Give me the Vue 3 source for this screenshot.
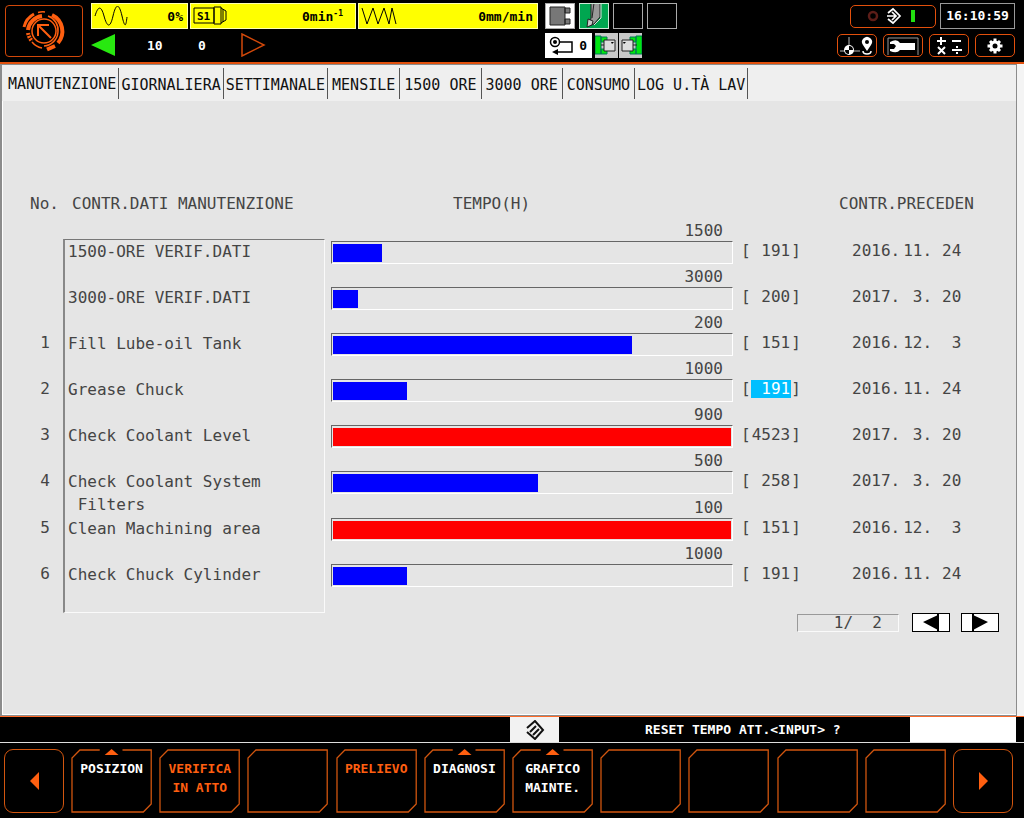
<script setup>
import { ref } from 'vue'

const tabs = [
  { label: 'MANUTENZIONE', tight: true },
  { label: 'GIORNALIERA', tight: true },
  { label: 'SETTIMANALE', tight: true },
  { label: 'MENSILE' },
  { label: '1500 ORE' },
  { label: '3000 ORE' },
  { label: 'CONSUMO' },
  { label: 'LOG U.TÀ LAV', tight: true }
]
const activeTab = ref('MANUTENZIONE')
const pageText = '1/  2'

const rows = [
  { no: '', name: '1500-ORE VERIF.DATI', limit: '1500', fill: 12.2, value: ' 191', date: ['2016.', '11.', '24'] },
  { no: '', name: '3000-ORE VERIF.DATI', limit: '3000', fill: 6.2, value: ' 200', date: ['2017.', ' 3.', '20'] },
  { no: '1', name: 'Fill Lube-oil Tank', limit: '200', fill: 75, value: ' 151', date: ['2016.', '12.', ' 3'] },
  { no: '2', name: 'Grease Chuck', limit: '1000', fill: 18.6, value: ' 191', date: ['2016.', '11.', '24'], selected: true },
  { no: '3', name: 'Check Coolant Level', limit: '900', fill: 100, value: '4523', date: ['2017.', ' 3.', '20'], over: true },
  { no: '4', name: 'Check Coolant System\n Filters', limit: '500', fill: 51.5, value: ' 258', date: ['2017.', ' 3.', '20'] },
  { no: '5', name: 'Clean Machining area', limit: '100', fill: 100, value: ' 151', date: ['2016.', '12.', ' 3'], over: true },
  { no: '6', name: 'Check Chuck Cylinder', limit: '1000', fill: 18.6, value: ' 191', date: ['2016.', '11.', '24'] }
]

const keys = [
  { text: 'POSIZION', menu: true },
  { text: 'VERIFICA\nIN ATTO', active: true },
  { text: '' },
  { text: 'PRELIEVO', active: true },
  { text: 'DIAGNOSI', menu: true },
  { text: 'GRAFICO\nMAINTE.', menu: true, left: true },
  { text: '' },
  { text: '' },
  { text: '' },
  { text: '' }
]
</script>

<template>
  <div class="screen">
    <header class="top">
      <button class="mode" aria-label="Mode">
        <svg width="48" height="48" viewBox="0 0 48 48" fill="none" stroke="#ff5f10">
          <circle cx="24" cy="24" r="12" stroke-width="1.5" />
          <path d="M8 23A16 16 0 0 1 22 9" stroke-width="4" />
          <path d="M4 20A20 20 0 0 1 14 7" stroke-width="3" />
          <path d="M18 5.500A19 19 0 0 1 25 5M28 9A15 15 0 0 1 38 25A15 15 0 0 1 24 39" stroke-width="1.5" />
          <path d="M32 8A18 18 0 0 1 38 36" stroke-width="4" />
          <path d="M27 42.500L35 39" stroke-width="4" />
          <path d="M8 26A16 16 0 0 0 12 34" stroke-width="4" stroke-dasharray="2 1" />
          <path d="M12 35A17 17 0 0 0 22 41" stroke-width="1.5" />
          <path d="M31 31L18 18M18 29V18H29" stroke-width="2" />
        </svg>
      </button>

      <div class="readouts">
        <div class="meters">
          <div class="meter">
            <svg width="34" height="20" viewBox="0 0 34 20" fill="none" stroke="#000">
              <path d="M1 10C4 0 7-1 10 10S16 23 19 10S25-3 28 10S32 20 33 11" />
            </svg>
            <span>0%</span>
          </div>
          <div class="meter speed">
            <svg width="36" height="20" viewBox="0 0 36 20" fill="none" stroke="#000">
              <path d="M1 2H21V17H1ZM21 1H28V18H21ZM28 2L33 5V14L28 17M30 3V16" />
              <text x="4" y="14" font-size="11" font-weight="bold" font-family="DejaVu Sans Mono, monospace" fill="#000" stroke="none">S1</text>
            </svg>
            <span>0min<sup>-1</sup></span>
          </div>
          <div class="meter">
            <svg width="36" height="20" viewBox="0 0 36 20" fill="none" stroke="#000">
              <path d="M1 2L6 18L12 2L17 18L23 2L28 18L31 2L35 18" />
            </svg>
            <span>0mm/min</span>
          </div>
        </div>
        <div class="overrides">
          <svg width="24" height="24" viewBox="0 0 24 24"><path d="M0 12L24 1V23Z" fill="#28e810" /></svg>
          <span class="pct">10</span>
          <span class="step">0</span>
          <svg width="25" height="24" viewBox="0 0 25 24"><path d="M1 1V23L23 12Z" fill="none" stroke="#d2480a" stroke-width="1.5" /></svg>
        </div>
      </div>

      <div class="states">
        <div class="state-row">
          <span class="state light">
            <svg width="30" height="26" viewBox="0 0 30 26">
              <path d="M5 4H20V22H5ZM20 5H25V10H20ZM20 16H25V21H20Z" fill="#777" stroke="#222" />
            </svg>
          </span>
          <span class="state green">
            <svg width="30" height="26" viewBox="0 0 30 26" stroke="#222">
              <path d="M12 0H21V14L15 21L10 23L12 15Z" fill="#999" />
              <path d="M22 0V15L15 22" fill="none" stroke="#ddd" />
              <path d="M9 16L14 18L13 22L8 24Z" fill="#ccc" />
              <path d="M15 0L13 15" fill="none" />
            </svg>
          </span>
          <span class="state"></span>
          <span class="state"></span>
        </div>
        <div class="state-row lower">
          <span class="turret">
            <svg width="28" height="24" viewBox="0 0 28 24" fill="none" stroke="#000" stroke-width="1.5">
              <circle cx="8" cy="8" r="4.5" /><circle cx="8" cy="8" r="2" fill="#000" stroke="none" />
              <path d="M12 8H25V18H9" /><path d="M5 18L11 15V21Z" fill="#000" stroke="none" />
            </svg>
            <b>0</b>
          </span>
          <span class="chucks">
            <svg width="23" height="25" viewBox="0 0 23 25">
              <path d="M0 3H6V21H0ZM6 4H12V9H6ZM6 16H12V21H6Z" fill="#00e610" stroke="#075" />
              <path d="M6 12H10" stroke="#222" /><path d="M9 7H20V18H9Z" fill="#ddd" stroke="#222" /><path d="M16 9H19L17 11Z" />
            </svg>
            <svg width="23" height="25" viewBox="0 0 23 25">
              <path d="M17 3H23V21H17ZM11 4H17V9H11ZM11 16H17V21H11Z" fill="#00e610" stroke="#075" />
              <path d="M13 12H18" stroke="#222" /><path d="M3 7H14V18H3Z" fill="#ddd" stroke="#222" /><path d="M4 9H7L5 11Z" />
            </svg>
          </span>
        </div>
      </div>

      <div class="tools">
        <div class="tool-row">
          <button class="tool link" aria-label="Data input state">
            <svg width="60" height="20" viewBox="0 0 60 20" fill="none">
              <circle cx="10" cy="10" r="4" stroke="#5c1d18" stroke-width="2.5" />
              <path d="M25 7L30 3L37 10L30 17L25 13M24 10H33M29 6L33 10L29 14" stroke="#fff" stroke-width="1.7" />
              <path d="M50 4V16" stroke="#22e010" stroke-width="4" />
            </svg>
          </button>
          <time class="clock">16:10:59</time>
        </div>
        <div class="tool-row">
          <button class="tool" aria-label="Origin">
            <svg width="38" height="20" viewBox="0 0 38 20">
              <path d="M11 1V19M2 15H22" stroke="#bbb" fill="none" />
              <circle cx="11" cy="14" r="5" fill="#fff" /><path d="M11 14V10A4 4 0 0 1 15 14ZM11 14V18A4 4 0 0 1 7 14Z" />
              <path d="M29 15L25 9A5 5 0 1 1 33 9Z" fill="#fff" /><circle cx="29" cy="6" r="2" />
              <path d="M25 15Q25 18 29 18Q33 18 33 15" stroke="#fff" stroke-width="1.5" fill="none" />
            </svg>
          </button>
          <button class="tool" aria-label="Maintenance">
            <svg width="34" height="20" viewBox="0 0 34 20">
              <path d="M2 19V2H32V19" stroke="#999" fill="none" />
              <path d="M4 6Q11 2 14 7H29V14H14Q11 18 4 15V13H8L10 10L8 8H4Z" fill="#fff" />
            </svg>
          </button>
          <button class="tool" aria-label="Calculator">
            <svg width="30" height="20" viewBox="0 0 30 20" stroke="#fff" stroke-width="2" fill="none">
              <path d="M3 5H12M7 1V9M18 5H27M4 11L11 18M11 11L4 18M18 14H28" />
              <path d="M22 11H24M22 17H24" />
            </svg>
          </button>
          <button class="tool" aria-label="Settings">
            <svg width="20" height="20" viewBox="-10 -10 20 20">
              <path d="M0-7.500V7.500M-7.500 0H7.500M-5-5L5 5M-5 5L5-5" stroke="#fff" stroke-width="3" />
              <circle r="5.500" fill="#fff" /><circle r="2.500" />
            </svg>
          </button>
        </div>
      </div>
    </header>

    <main class="panel">
      <nav class="tabs">
        <button
          v-for="t in tabs"
          :key="t.label"
          class="tab"
          :class="{ tight: t.tight, active: activeTab === t.label }"
          @click="activeTab = t.label"
        >{{ t.label }}</button>
      </nav>

      <div class="content">
        <table class="items">
          <colgroup><col class="c-no" /><col class="c-name" /><col /><col class="c-value" /><col class="c-date" /></colgroup>
          <thead>
            <tr>
              <th>No.</th>
              <th class="h-name">CONTR.DATI MANUTENZIONE</th>
              <th class="h-time" colspan="2">TEMPO(H)</th>
              <th>CONTR.PRECEDEN</th>
            </tr>
          </thead>
          <tbody>
            <tr v-for="(r, i) in rows" :key="i">
              <td class="no">{{ r.no }}</td>
              <td class="name">{{ r.name }}</td>
              <td class="time">
                <div class="limit">{{ r.limit }}</div>
                <div class="track"><div class="fill" :class="{ over: r.over }" :style="{ width: r.fill + '%' }"></div></div>
              </td>
              <td class="value">[<span class="count" :class="{ selected: r.selected }">{{ r.value }}</span>]</td>
              <td class="date"><span>{{ r.date[0] }}</span><span>{{ r.date[1] }}</span><span class="day">{{ r.date[2] }}</span></td>
            </tr>
          </tbody>
        </table>

        <div class="pager">
          <output class="page">{{ pageText }}</output>
          <button class="flip" aria-label="Previous page">
            <svg width="36" height="17" viewBox="0 0 36 17"><path d="M10 8L25 1V16Z" /><path d="M25 0V17" stroke="#000" stroke-width="2" /></svg>
          </button>
          <button class="flip" aria-label="Next page">
            <svg width="36" height="17" viewBox="0 0 36 17"><path d="M26 8L11 1V16Z" /><path d="M11 0V17" stroke="#000" stroke-width="2" /></svg>
          </button>
        </div>
      </div>
    </main>

    <div class="message">
      <button class="reset" aria-label="Reset">
        <svg width="20" height="20" viewBox="0 0 20 20" fill="none" stroke="#111" stroke-width="2">
          <path d="M2 8L10 1L18 10L10 19L2 12M5 12L11 6M8 15L14 9" />
        </svg>
      </button>
      <label for="entry">RESET TEMPO ATT.&lt;INPUT&gt; ?</label>
      <input id="entry" class="entry" type="text" />
    </div>

    <footer class="keys">
      <button class="arrow" aria-label="Previous keys"><svg width="9" height="18" viewBox="0 0 9 18"><path d="M0 9L9 0V18Z" /></svg></button>
      <button v-for="(k, i) in keys" :key="i" class="key" :class="{ active: k.active }" :aria-label="k.text || 'Tasto ' + (i + 1)">
        <svg class="outline" viewBox="0 0 82 64" preserveAspectRatio="none">
          <path v-if="k.menu" d="M29 1H9L1 9V63H73L81 55V1H52" />
          <path v-else d="M9 1L1 9V63H73L81 55V1Z" />
          <path v-if="k.menu" class="mark" d="M41 0L48 6H34Z" />
        </svg>
        <span class="caption" :class="{ left: k.left }">{{ k.text }}</span>
      </button>
      <button class="arrow" aria-label="Next keys"><svg width="9" height="18" viewBox="0 0 9 18"><path d="M9 9L0 0V18Z" /></svg></button>
    </footer>
  </div>
</template>

<style>
body { margin: 0; background: #000; }
</style>

<style scoped>
.screen, .screen * { box-sizing: border-box; }
.screen {
  min-height: 100vh;
  display: flex;
  flex-direction: column;
  background: #000;
  color: #fff;
  font-family: "DejaVu Sans Mono", "Liberation Mono", monospace;
  font-size: 13px;
}
button { font: inherit; color: inherit; padding: 0; margin: 0; background: none; border: 0; }
svg { display: block; flex: none; }

.top { display: flex; height: 64px; padding: 3px 9px 0 5px; border-bottom: 2px solid #e2500c; font-weight: bold; }
.mode { width: 78px; height: 52px; margin: 2px 8px 0 0; border: 1px solid #d2480a; border-radius: 4px; display: flex; align-items: center; justify-content: center; }
.readouts { width: 447px; }
.meters { display: grid; grid-template-columns: 97fr 166fr 180fr; gap: 2px; height: 26px; }
.meter { display: flex; align-items: center; justify-content: space-between; padding: 0 4px 0 2px; background: #ff0; color: #000; border: 1px solid #ffffb0; }
.speed { padding-right: 12px; }
.meter sup { font-size: 8px; line-height: 8px; }
.overrides { display: flex; align-items: center; height: 32px; }
.pct { margin-left: 32px; width: 51px; }
.step { width: 43px; }

.states { margin-left: 7px; }
.state-row { display: flex; gap: 4px; }
.state-row.lower { margin-top: 4px; gap: 3px; }
.state { width: 30px; height: 26px; border: 1px solid #aaa; display: flex; align-items: center; justify-content: center; overflow: hidden; }
.light { background: #fff; }
.green { background: #00a650; border-color: #cfe8d8; }
.turret { width: 47px; height: 25px; padding: 0 5px 0 2px; background: #fff; color: #000; display: flex; align-items: center; justify-content: space-between; }
.chucks { display: flex; gap: 1px; }
.chucks svg { background: #c8c8c8; }

.tools { margin-left: auto; display: flex; flex-direction: column; align-items: flex-end; gap: 5px; }
.tool-row { display: flex; gap: 6px; }
.tool-row:first-child { gap: 4px; align-items: center; }
.tool { width: 40px; height: 23px; border: 1px solid #e2500c; border-radius: 5px; display: flex; align-items: center; justify-content: center; }
.link { width: 86px; }
.clock { width: 75px; height: 26px; border: 1px solid #999; line-height: 24px; text-align: center; }

.panel {
  flex: 1;
  margin-right: 7px;
  border: 1px solid #8c8c8c;
  border-left-width: 2px;
  background: #e5e5e5;
  box-shadow: 7px 0 0 #f4f4f4, inset 1px -1px 0 #fff;
  color: #444;
  font-size: 16px;
}
.tabs { display: flex; height: 36px; padding: 3px 0 2px 4px; background: #efefef; }
.tab { padding: 2px 4px 0; border-right: 1px solid #555; font-size: 15px; color: #111; }
.tab.tight { padding: 2px 2px 0; }
.tab.tight.active { padding: 0 2px; }

.content { padding: 93px 17px 0 28px; }
.items { width: calc(100% - 23px); table-layout: fixed; border-collapse: separate; border-spacing: 0; line-height: 20px; }
.c-no { width: 33px; }
.c-name { width: 262px; }
.c-value { width: 98px; }
.c-date { width: 137px; }
th { height: 45px; padding: 0; vertical-align: top; text-align: left; font-weight: normal; white-space: nowrap; }
.h-name { padding-left: 9px; }
.h-time { padding-left: 128px; }
td { height: 46px; padding: 2px 0 0; vertical-align: top; white-space: pre; }
.no { padding-right: 3px; text-align: center; }
.name { padding: 1px 0 0 3px; line-height: 23px; border-left: 2px solid #888; border-right: 1px solid #fafafa; }
tr:first-child .name { padding-top: 0; border-top: 1px solid #777; }
tr:last-child .name { height: 51px; border-bottom: 1px solid #fafafa; }
.time { padding: 2px 8px 0 6px; }
.limit { margin-top: -20px; padding-right: 10px; text-align: right; }
.track { height: 23px; padding: 2px 1px; border: 1px solid; border-color: #666 #fff #fff #666; }
.fill { height: 18px; background: #00f; }
.fill.over { background: #f00; }
.count { display: inline-block; height: 18px; line-height: 18px; padding: 0 1px; }
.selected { background: #00bfff; color: #fff; }
.date { padding-left: 13px; }
.date span { margin-right: 3px; }
.date .day { margin: 0 0 0 7px; }

.pager { display: flex; justify-content: flex-end; align-items: center; gap: 11px; }
.page { width: 102px; height: 18px; line-height: 16px; padding-right: 16px; text-align: right; white-space: pre; border: 1px solid; border-color: #999 #fafafa #fafafa #999; margin-right: 2px; }
.flip { width: 38px; height: 19px; border: 1px solid #000; background: #fff; display: flex; }

.message {
  display: grid;
  grid-template-columns: 1fr 49px 86px 265px 106px 8px;
  height: 27px;
  border-top: 1px solid #ff6a28;
  border-bottom: 1px solid #ddd;
  font-weight: bold;
  line-height: 25px;
}
.reset { grid-column: 2; background: #f2f2f2; display: flex; align-items: center; justify-content: center; }
.message label { grid-column: 4; white-space: nowrap; }
.entry { grid-column: 5; width: 100%; min-width: 0; border: 0; padding: 0 4px; background: #fff; font: inherit; }

.keys { display: flex; gap: 7px; height: 75px; padding: 6px 11px 5px 4px; font-weight: bold; }
.arrow { width: 60px; border: 1px solid #d2560f; border-radius: 9px; display: flex; align-items: center; justify-content: center; fill: #ff5f10; }
.key { position: relative; flex: 1; display: flex; justify-content: center; align-items: flex-start; padding-top: 10px; }
.outline { position: absolute; inset: 0; width: 100%; height: 100%; fill: none; stroke: #d2560f; stroke-width: 1.3; }
.mark { fill: #ff5f10; stroke: none; }
.caption { position: relative; line-height: 19px; white-space: pre; text-align: center; }
.caption.left { text-align: left; }
.key.active { color: #ff5f10; }
</style>
